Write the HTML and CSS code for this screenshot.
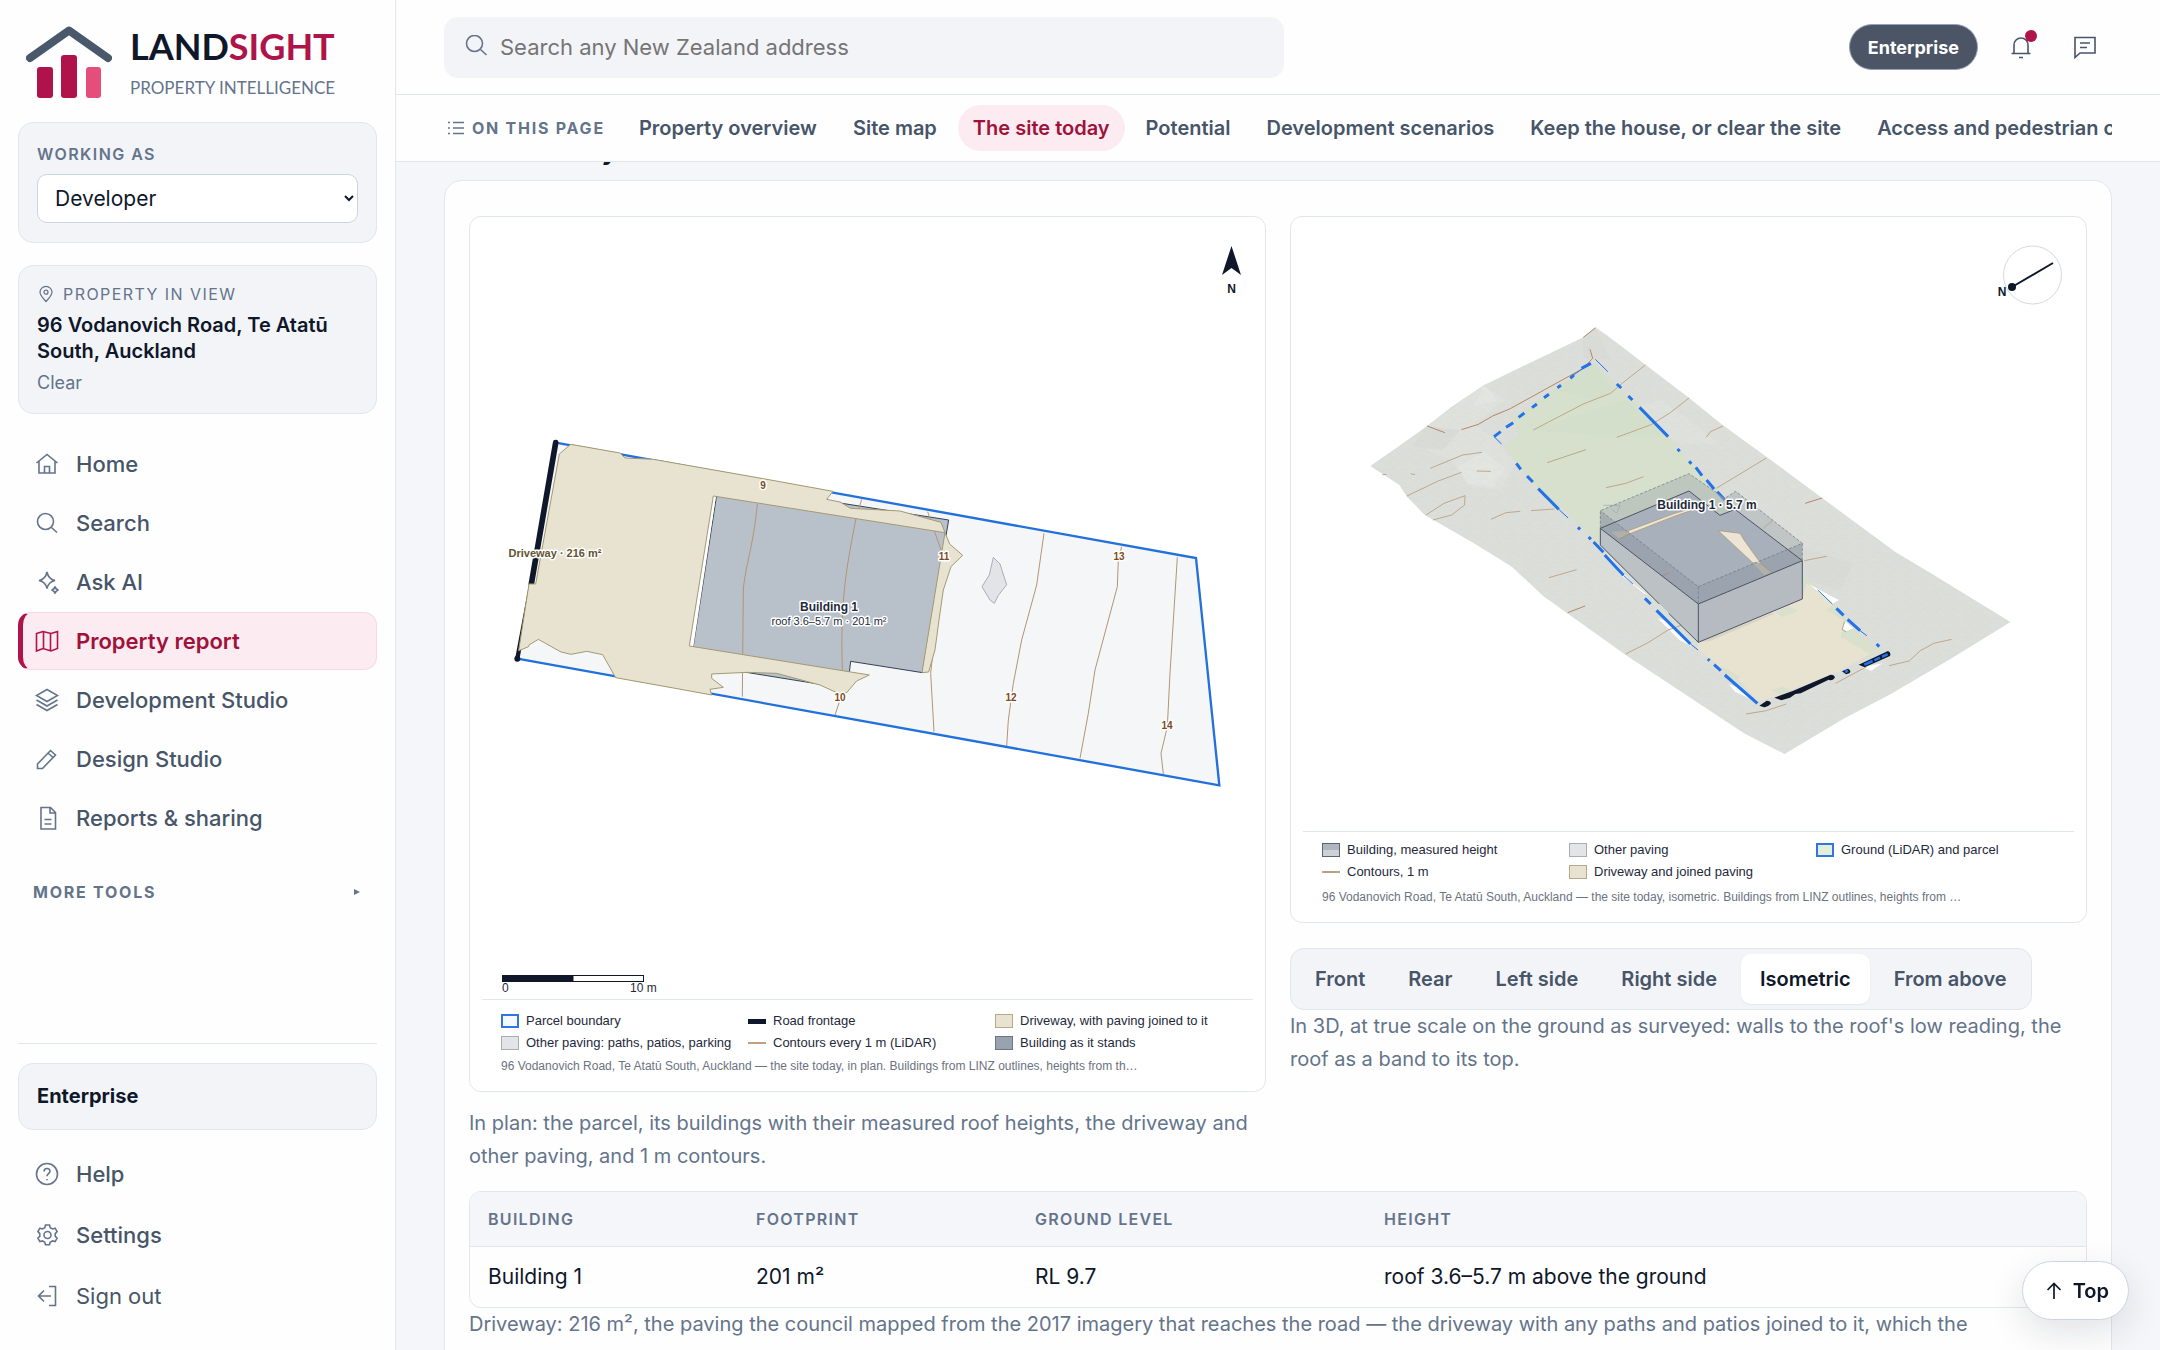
FILE: index.html
```html
<!DOCTYPE html>
<html lang="en">
<head>
<meta charset="utf-8">
<meta name="viewport" content="width=device-width, initial-scale=1">
<title>Landsight – Property report</title>
<link rel="stylesheet" href="styles.css">
</head>
<body>
<div class="app">
  <aside class="sidebar">
    <a class="brand" href="#home" aria-label="Landsight home">
      <svg class="brand-mark" viewBox="0 0 86 72" aria-hidden="true">
        <path d="M4 32 43 4.500 82 32" fill="none" stroke="#4a586c" stroke-width="8" stroke-linecap="round" stroke-linejoin="round"/>
        <rect x="11" y="41" width="16" height="31" rx="3" fill="#b0134a"/>
        <rect x="35" y="29" width="16" height="43" rx="3" fill="#b0134a"/>
        <rect x="60" y="41" width="15" height="31" rx="3" fill="#e54e7c"/>
      </svg>
      <span class="brand-text">
        <span class="brand-name">LAND<span class="brand-accent">SIGHT</span></span>
        <span class="brand-tag">PROPERTY INTELLIGENCE</span>
      </span>
    </a>

    <div class="side-card role-card">
      <label class="side-label" for="role">WORKING AS</label>
      <select id="role" class="role-select">
        <option>Developer</option>
        <option>Homeowner</option>
      </select>
    </div>

    <div class="side-card property-card">
      <div class="property-label">
        <svg class="icon-pin" viewBox="0 0 18 18" aria-hidden="true"><path d="M9 16.500C6 13 3 10.500 3 7.300a6 6 0 0 1 12 0c0 3.200-3 5.700-6 9.200Z"/><circle cx="9" cy="7.200" r="2"/></svg>
        PROPERTY IN VIEW
      </div>
      <strong class="property-name">96 Vodanovich Road, Te Atatū South, Auckland</strong>
      <button class="clear-btn" type="button">Clear</button>
    </div>

    <nav class="side-nav" aria-label="Main">
      <a class="side-link" href="#home"><svg class="icon" viewBox="0 0 24 24"><path d="M1.500 11 12 2.500 22.500 11M4 9.500V21h16V9.500M9.500 21v-6.500h5V21"/></svg>Home</a>
      <a class="side-link" href="#search"><svg class="icon" viewBox="0 0 24 24"><circle cx="10.500" cy="10.500" r="8"/><path d="m16.500 16.500 5.500 5"/></svg>Search</a>
      <a class="side-link" href="#ask"><svg class="icon" viewBox="0 0 24 24"><path d="M12 2c1 5 3 7.500 8 8.500-5 1-7 3-8 8-1-5-3-7-8-8 5-1 7-3.500 8-8.500Z"/><path d="M20 16.500c.4 2 1.300 3 3.500 3.500-2.200.5-3.100 1.500-3.500 3.500-.4-2-1.300-3-3.500-3.500 2.200-.5 3.100-1.500 3.500-3.500Z"/></svg>Ask AI</a>
      <a class="side-link is-active" href="#report" aria-current="page"><svg class="icon" viewBox="0 0 24 24"><path d="m1.500 4.500 6.500-2 8 2 6.500-2v17l-6.500 2.500-8-2.500-6.500 2.500ZM8.500 2.500v17M15.500 4.500V22"/></svg>Property report</a>
      <a class="side-link" href="#development"><svg class="icon" viewBox="0 0 24 24"><path d="m12 1.500 10.500 6L12 13.500l-10.500-6ZM1.500 12 12 18l10.500-6M1.500 16.500l10.500 6 10.500-6"/></svg>Development Studio</a>
      <a class="side-link" href="#design"><svg class="icon" viewBox="0 0 24 24"><path d="m2.500 17 13-13.500 5 4.500L7.500 21.500h-5ZM13 6l5 4.500"/></svg>Design Studio</a>
      <a class="side-link" href="#reports"><svg class="icon" viewBox="0 0 24 24"><path d="M6 1.500h9.500l5 5V23H6ZM15 1.500V7h5.500M9.500 13.500h7M9.500 18h7"/></svg>Reports &amp; sharing</a>
    </nav>

    <button class="more-tools" type="button">MORE TOOLS<svg class="icon-caret" viewBox="0 0 6 8" aria-hidden="true"><path d="M0 1 6 4 0 7Z"/></svg></button>

    <div class="side-foot">
      <div class="side-card plan-card">Enterprise</div>
      <a class="side-link foot-link" href="#help"><svg class="icon" viewBox="0 0 24 24"><circle cx="12" cy="12" r="10.500"/><path d="M9 9.500c0-4 6-4 6-.3 0 2.300-3 2.500-3 5M12 17v1.200"/></svg>Help</a>
      <a class="side-link foot-link" href="#settings"><svg class="icon" viewBox="0 0 24 24"><path d="M10.500 2h4l.7 2.600 2.300 1.300 2.600-.7 2 3.400-1.900 2v2.600l1.900 2-2 3.400-2.600-.7-2.300 1.300-.7 2.600h-4l-.7-2.600-2.300-1.300-2.600.7-2-3.400 1.900-2v-2.600l-1.900-2 2-3.400 2.600.7 2.300-1.300Z"/><circle cx="12.500" cy="12" r="3.500"/></svg>Settings</a>
      <a class="side-link foot-link" href="#signout"><svg class="icon" viewBox="0 0 24 24"><path d="M14 2.500h6.500v19H14M16 12H4M9 6.500 3.500 12 9 17.500"/></svg>Sign out</a>
    </div>
  </aside>

  <div class="main">
    <div class="sticky-head">
      <header class="topbar">
        <div class="search">
          <svg class="icon search-icon" viewBox="0 0 24 24" aria-hidden="true"><circle cx="10.500" cy="8.500" r="8"/><path d="m16.500 14.500 6 5.500"/></svg>
          <input class="search-input" type="search" placeholder="Search any New Zealand address" aria-label="Search any New Zealand address">
        </div>
        <div class="top-actions">
          <span class="plan-pill">Enterprise</span>
          <button class="icon-btn" type="button" aria-label="Notifications">
            <svg class="icon" viewBox="0 0 24 24"><path d="M5 18.500V10a7 7 0 0 1 14 0v8.500M2.500 18.500h19M10 22.500h4"/></svg>
            <span class="dot"></span>
          </button>
          <button class="icon-btn" type="button" aria-label="Messages">
            <svg class="icon" viewBox="0 0 24 24"><path d="M2 2.500h20V18H7l-5 4.500ZM7 8h10M7 12.500h7"/></svg>
          </button>
        </div>
      </header>
      <nav class="page-nav" aria-label="On this page">
        <span class="page-nav-title"><svg class="icon-list" viewBox="0 0 16 16" aria-hidden="true"><path d="M5 2.500h11M5 8h11M5 13.500h11M0 2.500h2M0 8h2M0 13.500h2"/></svg>ON THIS PAGE</span>
        <a class="page-link" href="#overview">Property overview</a>
        <a class="page-link" href="#map">Site map</a>
        <a class="page-link is-current" href="#today">The site today</a>
        <a class="page-link" href="#potential">Potential</a>
        <a class="page-link" href="#scenarios">Development scenarios</a>
        <a class="page-link" href="#keep">Keep the house, or clear the site</a>
        <a class="page-link" href="#access">Access and pedestrian connections</a>
      </nav>
    </div>

    <main class="content">
      <h2 class="section-title" id="today">The site today</h2>
      <section class="card">
        <div class="views">
          <div class="view">
            <figure class="sheet">
              <svg class="drawing" viewBox="482 217 771 782" role="img" aria-label="Site plan">
                <g class="plan" transform="translate(460 400) scale(.333333)">
                  <path class="parcel" d="M287 128 2208 474 2278 1156 172 776Z"/>
                  <path class="hole" d="M760 288 775 288 705 740 688 738Z"/>
                  <path class="building" d="M775 252 1466 360 1388 818 1172 784 1162 866 692 790Z"/>
                  <path class="gap" d="M755 286 768 288 700 741 686 741Z"/>
                  <path class="contour" d="M892 312C880 440 855 500 850 570L847 890M1205 298 1187 360C1160 500 1140 600 1147 810M1140 900 1125 945M1403 335 1450 470 1412 820 1422 995"/>
                  <path class="contour" transform="translate(1260 180)" d="M492 220 470 375 425 540 400 670 385 780 380 858M725 260 715 300 712 380 645 630 625 760 600 895M892 292 870 640 862 800 843 880 850 942"/>
                  <path class="parcel-line" d="M287 128 2208 474 2278 1156 172 776"/>
                  <path class="frontage" d="M287 128 214 552"/><path class="frontage thin" d="M214 552 172 776"/>
                  <circle cx="172" cy="776" r="9" fill="#0f172a"/>
                  <path class="driveway" fill-rule="evenodd" d="M298 162 332 133 480 159 495 174 580 178 910 236 1119 274 1100 298 1140 306 1172 325 1320 333 1443 367 1455 398 760 288 688 738 1228 825 1190 843 1160 878 1135 880 1080 855 950 820 860 817 755 822 755 835 790 862 750 868 755 885 640 864 467 833 428 764 380 754 333 763 303 756 235 718 207 735 206 740 176 752 207 552 227 552Z"/>
                  <path class="driveway" d="M1455 398 1469 432 1508 466 1473 500 1450 570 1437 660 1425 750 1406 816 1386 818Z"/>
                  <path class="paving" transform="translate(1260 180)" d="M340 292 360 312 380 374 355 406 343 430 330 420 306 380 328 345Z"/>
                </g>
                <g class="map-num" text-anchor="middle">
                  <text x="763" y="489">9</text><text x="944" y="560">11</text><text x="840" y="701">10</text>
                  <text x="1011" y="701">12</text><text x="1119" y="560">13</text><text x="1167" y="729">14</text>
                </g>
                <text class="map-drive" x="555" y="557" text-anchor="middle">Driveway · 216 m²</text>
                <text class="map-name" x="829" y="611" text-anchor="middle">Building 1</text>
                <text class="map-sub" x="829" y="625" text-anchor="middle">roof 3.6–5.7 m · 201 m²</text>
                <path d="M1231.500 246 1241 275 1231.500 268 1222 275Z" fill="#0f172a"/>
                <text class="north" x="1231.500" y="293" text-anchor="middle">N</text>
                <rect x="502" y="975" width="71" height="7" fill="#0f172a"/>
                <rect x="573" y="975.500" width="70.500" height="6" fill="#fff" stroke="#0f172a"/>
                <text class="scale" x="502" y="992">0</text><text class="scale" x="630" y="992">10 m</text>
              </svg>
              <div class="legend">
                <ul class="legend-list">
                  <li><i class="sw sw-parcel"></i>Parcel boundary</li>
                  <li><i class="sw sw-road"></i>Road frontage</li>
                  <li><i class="sw sw-drive"></i>Driveway, with paving joined to it</li>
                  <li><i class="sw sw-paving"></i>Other paving: paths, patios, parking</li>
                  <li><i class="sw sw-contour"></i>Contours every 1 m (LiDAR)</li>
                  <li><i class="sw sw-building"></i>Building as it stands</li>
                </ul>
                <p class="legend-note">96 Vodanovich Road, Te Atatū South, Auckland — the site today, in plan. Buildings from LINZ outlines, heights from th…</p>
              </div>
            </figure>
            <p class="caption caption-plan">In plan: the parcel, its buildings with their measured roof heights, the driveway and other paving, and 1 m contours.</p>
          </div>

          <div class="view">
            <figure class="sheet">
              <svg class="drawing" viewBox="1303 217 771 614" role="img" aria-label="Isometric view of the site">
                <defs>
                  <pattern id="mesh" width="34" height="28" patternUnits="userSpaceOnUse"><path d="M0 6 17 0 34 16M17 0 8 14 24 28M8 14 0 18" fill="none" stroke="#b9bcb8" stroke-width=".5" opacity=".45"/></pattern>
                </defs>
                <g class="iso" transform="translate(1340 300) scale(.446429 .333333)">
                  <path id="land" fill="#dcdeda" d="M572 82 600 108 680 190 780 292 860 378 955 470 1080 594 1245 757 1330 825 1502 966 1370 1075 1230 1185 1130 1255 996 1362 905 1300 640 1065 455 888 385 800 300 730 190 645 150 590 133 555 68 498 130 440 195 378 250 320 322 256 400 205 545 112Z"/>
                  <path fill="#dfe1dd" d="M322 256 370 300 300 370 340 410 395 490 360 570 290 560 250 480 195 450 195 378ZM640 330 720 300 850 430 760 430Z"/>
                  <path fill="#e6e8e4" d="M265 500 320 455 370 505 345 560 285 550ZM322 256 355 300 300 320Z" opacity=".6"/>
                  <path fill="#d9dbd7" d="M572 82 605 180 545 175 545 112ZM1040 740 1150 790 1120 870 1040 840ZM195 378 270 390 230 450 160 440Z"/>
                  <path fill="url(#mesh)" d="M572 82 600 108 680 190 780 292 860 378 955 470 1080 594 1245 757 1330 825 1502 966 1370 1075 1230 1185 1130 1255 996 1362 905 1300 640 1065 455 888 385 800 300 730 190 645 150 590 133 555 68 498 130 440 195 378 250 320 322 256 400 205 545 112Z"/>
                  <path fill="#d6e0cd" d="M570 188 385 350 400 405 365 440 395 490 440 560 510 640 583 740 803 1026 900 1135 970 1165 1200 1062 1105 910 860 600 735 410 625 262Z"/>
                  <path fill="#d2ddc9" d="M570 188 480 270 570 300 610 270ZM430 390 620 410 735 410 640 300Z" opacity=".5"/>
                  <path fill="#e8e2d1" d="M1045 850 1105 915 1090 930 1128 960 1122 1010 1188 1062 1120 1112 985 1185 935 1205 895 1140 840 1090 800 1045 803 1026 1036 895Z"/>
                  <path fill="#d9e0cc" d="M975 935 1005 918 1026 932 992 952ZM1122 1010 1150 990 1205 1050 1188 1062ZM965 1170 993 1160 1020 1176 990 1186ZM850 1095 898 1132 880 1140ZM1090 930 1105 915 1128 950Z"/>
                  <path fill="#fff" d="M1050 852 1117 900 1103 912ZM1132 965 1150 985 1134 994 1126 986ZM600 765 655 850 690 885 680 880 625 820ZM712 955 735 965 790 1040 760 1020ZM870 1152 895 1165 925 1200 885 1175ZM1170 1102 1215 1090 1190 1112Z"/>
                  <path class="contour strong" d="M545 112 572 84M560 148 566 175 545 205 380 327 342 348 310 373 272 389M195 378 235 398M1042 610 1080 594M510 938 549 918"/>
                  <path class="contour" d="M684 195 632 250 606 280 545 312 433 390M782 294 740 338 697 374 620 412M858 378 830 395 820 412M955 474 843 565M318 457 275 465 202 505M306 513 338 514M272 517 220 543 150 588M280 587 233 610 193 645M280 587 279 615 250 645 208 660M404 634 372 638 338 658M480 627 428 632M551 449 464 488M680 530 640 550 596 563M530 809 468 833M1090 769 1040 782M970 660 948 685M800 958 735 990 690 1028 640 1062M910 1242 955 1232 1000 1212M1110 1150 1180 1100M1370 1018 1330 1030 1300 1052 1275 1083 1230 1097M95 524 104 523M158 521 168 524M1130 965 1125 988 1134 996"/>
                  <path class="iso-line" d="M345 410 360 395M372 382 388 368M400 352 413 339M430 323 441 312M457 293 468 283M487 263 495 256M516 235 524 225M541 205 562 190M620 252 630 264M646 288 655 300M671 322 735 410M756 447 761 454M782 484 787 491M797 502 811 527M821 540 838 567M845 575 862 600M395 490 405 508M419 528 432 546M444 566 490 628M533 682 538 688M557 711 562 718M568 726 590 757M593 765 635 826M683 895 696 912M709 931 785 1032M824 1077 828 1082M838 1094 853 1112M862 1125 935 1210M1112 925 1128 946M1137 958 1165 992M1202 1032 1208 1040"/>
                  <path class="iso-line fine" d="M345 410 362 432M572 178 600 215M490 628 511 654M635 826 656 852M785 1032 802 1050M1165 992 1180 1007M1070 870 1103 912M560 190 516 232"/>
                </g>
                <g transform="translate(1560 460) scale(.333333)">
                  <path fill="#0f172a" d="M598 737 620 722Q634 722 632 732 620 744 610 741ZM643 713 700 692 812 644Q826 644 824 654 816 664 806 659L722 700 706 702 690 713 664 721ZM846 634 864 626Q876 632 868 640L858 643ZM896 614 984 573Q994 577 990 588L914 622Z"/>
                  <path d="M913 614 938 603M943 601 960 593M966 590 983 583M855 636 864 632" stroke="#2272e8" stroke-width="8" fill="none"/>
                  <path d="M121 255 415 547V432L121 205Z" fill="#bcc1c6"/>
                  <path d="M415 432 727 302V417L415 547Z" fill="#b6bbc1"/>
                  <path d="M121 205 387 93 480 166 525 148 727 302 415 432Z" fill="#a8b0bb"/>
                  <path d="M121 152 387 41 495 115 527 94 727 250 727 302 525 148 480 166 387 93 121 205Z" fill="#a3aeb0" opacity=".5"/>
                  <path d="M121 152 415 380 727 250V302L415 432 121 205Z" fill="#8d96a4" opacity=".5"/>
                  <path d="M205 212 345 160 385 148 395 151 345 168 205 223ZM475 212 540 220 552 240 602 310 578 308Z" fill="#ece4d4" stroke="#a8966a" stroke-width="2"/>
                  <path d="M602 310 635 337 612 345 578 308ZM205 212 205 223 178 237 155 215Z" fill="#afb1a9"/>
                  <path d="M602 310 635 337M205 223 178 237M326 339 308 347" fill="none" stroke="#a8866a" stroke-width="2"/>
                  <path d="M130 136H180L170 160 155 148" fill="none" stroke="#9aa6b0" stroke-width="2"/>
                  <path d="M415 547 640 458 640 463 450 543Z" fill="#d8d4c4"/>
                  <path class="edge" d="M121 205 387 93 480 166 525 148 727 302 415 432ZM121 205V255L298 432M326 460 415 547 727 417V302M415 432V547"/>
                  <path class="edge dashed" d="M121 205V152L387 41 495 115 527 94 727 250 415 380 121 152M415 380V432M727 250V302"/>
                </g>
                <text class="map-name iso-name" x="1707" y="509" text-anchor="middle">Building 1 · 5.7 m</text>
                <circle cx="2032.500" cy="275" r="29" fill="#fff" stroke="#d5d9e0"/>
                <path d="M2012 287 2053 263" stroke="#0f172a" stroke-width="2"/><circle cx="2012" cy="287" r="4" fill="#0f172a"/>
                <text class="north" x="2002" y="296" text-anchor="middle">N</text>
              </svg>
              <div class="legend legend-compact">
                <ul class="legend-list">
                  <li><i class="sw sw-measured"></i>Building, measured height</li>
                  <li><i class="sw sw-paving"></i>Other paving</li>
                  <li><i class="sw sw-ground"></i>Ground (LiDAR) and parcel</li>
                  <li><i class="sw sw-contour"></i>Contours, 1 m</li>
                  <li><i class="sw sw-drive"></i>Driveway and joined paving</li>
                </ul>
                <p class="legend-note">96 Vodanovich Road, Te Atatū South, Auckland — the site today, isometric. Buildings from LINZ outlines, heights from …</p>
              </div>
            </figure>
            <div class="tabs" role="group" aria-label="View">
              <button class="tab" type="button">Front</button>
              <button class="tab" type="button">Rear</button>
              <button class="tab" type="button">Left side</button>
              <button class="tab" type="button">Right side</button>
              <button class="tab is-on" type="button" aria-pressed="true">Isometric</button>
              <button class="tab" type="button">From above</button>
            </div>
            <p class="caption">In 3D, at true scale on the ground as surveyed: walls to the roof's low reading, the roof as a band to its top.</p>
          </div>
        </div>

        <div class="table-wrap">
          <table class="table">
            <colgroup><col class="c1"><col class="c2"><col class="c3"><col></colgroup>
            <thead><tr><th scope="col">BUILDING</th><th scope="col">FOOTPRINT</th><th scope="col">GROUND LEVEL</th><th scope="col">HEIGHT</th></tr></thead>
            <tbody><tr><td>Building 1</td><td>201 m²</td><td>RL 9.7</td><td>roof 3.6–5.7 m above the ground</td></tr></tbody>
          </table>
        </div>
        <p class="caption">Driveway: 216 m², the paving the council mapped from the 2017 imagery that reaches the road — the driveway with any paths and patios joined to it, which the</p>
      </section>
    </main>
  </div>
</div>
<a class="to-top" href="#top"><svg class="icon-up" viewBox="0 0 16 18" aria-hidden="true"><path d="M8 17V2M1.500 8 8 1.500 14.500 8"/></svg>Top</a>
</body>
</html>
```
FILE: styles.css
```css
:root {
  --ink: #0f172a;
  --slate: #475569;
  --muted: #64748b;
  --line: #e2e6ed;
  --soft: #f3f4f8;
  --page: #f5f6fa;
  --rose: #b0134a;
  --rose-dark: #9f1239;
  --rose-soft: #fcebf1;
  --map-font: "Liberation Sans", Arial, sans-serif;
}

* { box-sizing: border-box; }

body {
  margin: 0;
  background: var(--page);
  color: var(--ink);
  font-family: Inter, "Liberation Sans", sans-serif;
  font-size: 21px;
  scrollbar-width: none;
}

button, input, select { font: inherit; color: inherit; }
a { color: inherit; text-decoration: none; }
p, h2, ul, figure { margin: 0; padding: 0; }

.app {
  display: grid;
  grid-template-columns: 396px minmax(0, 1fr);
}

.icon {
  width: 24px;
  height: 24px;
  flex: none;
  fill: none;
  stroke: currentColor;
  stroke-width: 1.600;
}

/* Sidebar */
.sidebar {
  position: sticky;
  top: 0;
  height: 100vh;
  display: flex;
  flex-direction: column;
  padding: 24px 18px 25px;
  background: #fefefe;
  border-right: 1px solid var(--line);
}

.brand {
  display: flex;
  align-items: center;
  gap: 18px;
  height: 76px;
  padding-left: 8px;
  margin-bottom: 22px;
  flex: none;
}
.brand-mark { width: 86px; height: 72px; }
.brand-text { display: flex; flex-direction: column; gap: 12px; font-family: Lato, sans-serif; }
.brand-name { font-size: 36px; line-height: 40px; font-weight: 700; }
.brand-accent { color: var(--rose); }
.brand-tag { font-size: 17px; line-height: 20px; color: var(--muted); white-space: nowrap; }

.side-card {
  flex: none;
  padding: 19px 18px;
  background: var(--soft);
  border: 1px solid var(--line);
  border-radius: 15px;
}
.role-card { height: 121px; margin-bottom: 22px; display: flex; flex-direction: column; }
.side-label { font-size: 16px; line-height: 24px; font-weight: 600; letter-spacing: .09em; color: var(--muted); margin-bottom: 8px; }
.role-select {
  height: 49px;
  padding: 0 0 0 13px;
  background: #fff;
  border: 1px solid #cbd5e1;
  border-radius: 10px;
}

.property-card { height: 149px; margin-bottom: 21px; padding-top: 16px; display: flex; flex-direction: column; align-items: flex-start; }
.property-label { display: flex; align-items: center; gap: 8px; font-size: 16px; line-height: 24px; letter-spacing: .09em; color: var(--muted); margin-bottom: 6px; }
.icon-pin { width: 18px; height: 18px; fill: none; stroke: currentColor; stroke-width: 1.200; }
.property-name { font-size: 20px; line-height: 26px; font-weight: 600; }
.clear-btn { padding: 0; margin-top: 7px; border: 0; background: none; font-size: 18px; line-height: 24px; color: var(--muted); }

.side-nav { display: flex; flex-direction: column; gap: 1px; }
.side-link {
  display: flex;
  align-items: center;
  gap: 17px;
  height: 58px;
  padding-left: 17px;
  flex: none;
  border-radius: 13px;
  font-size: 22px;
  font-weight: 500;
  color: var(--slate);
}
.side-link .icon { color: var(--muted); }
.side-link.is-active {
  padding-left: 12px;
  background: var(--rose-soft);
  border: 1px solid #f7d9e3;
  border-left: 5px solid var(--rose);
  color: var(--rose-dark);
  font-weight: 600;
}
.side-link.is-active .icon { color: var(--rose); }

.more-tools {
  display: flex;
  align-items: center;
  justify-content: space-between;
  margin-top: 29px;
  padding: 0 17px 0 15px;
  height: 32px;
  flex: none;
  border: 0;
  background: none;
  font-size: 16px;
  font-weight: 700;
  letter-spacing: .11em;
  color: var(--muted);
}
.icon-caret { width: 6px; height: 8px; fill: currentColor; }

.side-foot {
  display: flex;
  flex-direction: column;
  gap: 3px;
  margin-top: auto;
  padding-top: 19px;
  border-top: 1px solid var(--line);
}
.plan-card { height: 67px; margin-bottom: 12px; font-size: 20px; line-height: 27px; font-weight: 700; }
.foot-link { font-weight: 500; }
.foot-link:last-child { font-weight: 400; }

/* Header */
.sticky-head {
  position: sticky;
  top: 0;
  z-index: 5;
  background: #fefeff;
  border-bottom: 1px solid var(--line);
}
.topbar {
  display: flex;
  align-items: center;
  justify-content: space-between;
  height: 95px;
  padding: 0 54px 0 48px;
  border-bottom: 1px solid var(--line);
}
.search {
  display: flex;
  align-items: center;
  gap: 12px;
  width: 840px;
  height: 61px;
  padding: 0 20px;
  background: var(--soft);
  border-radius: 14px;
}
.search-icon { color: var(--muted); }
.search-input {
  flex: 1;
  min-width: 0;
  padding: 0;
  border: 0;
  outline: 0;
  background: none;
  font-size: 22px;
}
.search-input::placeholder { color: #757575; }
.top-actions { display: flex; align-items: center; gap: 22px; }
.plan-pill {
  display: flex;
  align-items: center;
  height: 46px;
  padding: 0 18px;
  border: 1px solid #94a3b8;
  border-radius: 23px;
  background: #4b5565;
  color: #fff;
  font-size: 18px;
  font-weight: 700;
}
.icon-btn {
  position: relative;
  display: grid;
  place-items: center;
  width: 42px;
  height: 42px;
  padding: 0;
  border: 0;
  background: none;
  color: var(--slate);
}
.dot {
  position: absolute;
  top: 4px;
  right: 5px;
  width: 12px;
  height: 12px;
  border-radius: 50%;
  background: var(--rose);
}

.page-nav {
  display: flex;
  align-items: center;
  gap: 6px;
  height: 66px;
  margin: 0 48px;
  overflow: hidden;
  white-space: nowrap;
}
.page-nav-title {
  display: flex;
  align-items: center;
  gap: 8px;
  flex: none;
  padding-left: 4px;
  margin-right: 13px;
  font-size: 16px;
  font-weight: 700;
  letter-spacing: .11em;
  color: var(--muted);
}
.icon-list { width: 16px; height: 16px; stroke: currentColor; stroke-width: 1.500; }
.page-link {
  flex: none;
  height: 46px;
  padding: 0 15px;
  border-radius: 23px;
  font-size: 20px;
  line-height: 46px;
  font-weight: 600;
  color: var(--slate);
}
.page-link.is-current { background: var(--rose-soft); color: var(--rose-dark); }

/* Content */
.content { padding: 0 48px 48px; }
.section-title { margin-top: -27px; margin-bottom: 13px; font-size: 25px; line-height: 32px; font-weight: 700; }
.card {
  padding: 35px 24px;
  background: #fefefe;
  border: 1px solid var(--line);
  border-radius: 18px;
}
.views {
  display: grid;
  grid-template-columns: repeat(2, minmax(0, 1fr));
  gap: 24px;
  align-items: start;
}
.sheet {
  padding: 0 12px;
  background: #fff;
  border: 1px solid var(--line);
  border-radius: 12px;
}
.drawing { display: block; width: 100%; height: auto; }

.parcel { fill: #f4f6f8; }
.parcel-line { fill: none; stroke: #2270dc; stroke-width: 7; }
.gap, .hole { fill: #fff; }
.building { fill: #b8c0ca; stroke: #334155; stroke-width: 3; }
.driveway { fill: #e8e2d1; stroke: #a39a70; stroke-width: 3; stroke-linejoin: round; }
.paving { fill: #e2e4e8; stroke: #a9adb5; stroke-width: 3; }
.frontage { fill: none; stroke: #0f172a; stroke-width: 17; stroke-linecap: round; }
.frontage.thin { stroke-width: 13; }
.contour { fill: none; stroke: #b39473; stroke-width: 3; }
.iso .contour { stroke-width: 1px; vector-effect: non-scaling-stroke; stroke: #bfa888; }
.iso .contour.strong { stroke: #b58763; }
.iso-line { fill: none; stroke: #2272e8; stroke-width: 3px; vector-effect: non-scaling-stroke; }
.iso-line.fine { stroke-width: 1px; }
.edge { fill: none; stroke: #4b5363; stroke-width: 3; }
.edge.dashed { stroke: #6b7280; stroke-width: 2; stroke-dasharray: 9 5; }

.drawing text { font-family: var(--map-font); fill: #1e293b; }
.drawing .map-num text, .drawing .map-drive, .drawing .map-name, .drawing .map-sub {
  paint-order: stroke;
  stroke: #fff;
  stroke-width: 3px;
  stroke-linejoin: round;
}
.drawing .map-num text { font-size: 10px; font-weight: 700; fill: #7c4a21; }
.drawing .map-drive { font-size: 11px; font-weight: 700; fill: #5f5330; }
.drawing .map-name { font-size: 12px; font-weight: 700; }
.drawing .map-sub { font-size: 11px; }
.drawing .north { font-size: 12px; font-weight: 700; fill: #0f172a; }
.drawing .scale { font-size: 12px; }

.legend {
  padding: 10px 19px 17px;
  border-top: 1px solid var(--line);
  font-family: var(--map-font);
}
.legend-list {
  display: grid;
  grid-template-columns: repeat(3, 247px);
  list-style: none;
  font-size: 13px;
  line-height: 22px;
  color: #1e293b;
  white-space: nowrap;
}
.legend-list li { display: flex; align-items: center; gap: 7px; }
.sw { display: block; width: 18px; height: 14px; border: 1px solid #a9adb5; background: #e2e4e8; }
.sw-parcel { border: 2px solid #2f76e0; background: #f4f8ff; }
.sw-road { height: 5px; border: 0; background: #0f172a; }
.sw-drive { border-color: #b5aa85; background: #e8e2d1; }
.sw-contour { height: 2px; border: 0; background: #bca283; }
.sw-building { border-color: #6b7686; background: #99a3b0; }
.sw-measured { border-color: #5b6472; background: linear-gradient(#b0b6bf 50%, #cdd2d9 50%); }
.sw-ground { border: 2px solid #2f76e0; background: #e1efdc; }
.legend-note { margin-top: 4px; font-size: 12px; line-height: 16px; color: #6b7280; white-space: nowrap; }
.legend-compact { padding-top: 7px; }
.legend-compact .legend-note { margin-top: 6px; }

.caption { font-size: 20px; line-height: 33px; color: var(--muted); }
.caption-plan { margin-top: 15px; }

.tabs {
  display: flex;
  gap: 5px;
  width: max-content;
  margin-top: 25px;
  padding: 5px;
  background: var(--soft);
  border: 1px solid var(--line);
  border-radius: 14px;
}
.tab {
  height: 50px;
  padding: 0 19px;
  border: 0;
  border-radius: 10px;
  background: none;
  font-size: 20px;
  font-weight: 600;
  color: var(--slate);
}
.tab.is-on { background: #fff; color: var(--ink); box-shadow: 0 1px 2px rgba(15, 23, 42, .06); }

.table-wrap {
  margin-top: 18px;
  overflow: hidden;
  border: 1px solid var(--line);
  border-radius: 12px;
}
.table { width: 100%; border-collapse: collapse; table-layout: fixed; text-align: left; }
.c1 { width: 268px; }
.c2 { width: 279px; }
.c3 { width: 349px; }
.table th {
  height: 54px;
  padding: 0 18px;
  background: var(--page);
  border-bottom: 1px solid var(--line);
  font-size: 16px;
  font-weight: 600;
  letter-spacing: .08em;
  color: var(--muted);
}
.table td { height: 61px; padding: 0 18px; font-size: 21px; }

.to-top {
  position: fixed;
  right: 31px;
  bottom: 30px;
  z-index: 6;
  display: flex;
  align-items: center;
  gap: 11px;
  height: 59px;
  padding: 0 19px 0 23px;
  background: #fff;
  border: 1px solid #cbd5e1;
  border-radius: 30px;
  box-shadow: 0 12px 36px rgba(15, 23, 42, .12);
  font-size: 20px;
  font-weight: 600;
}
.icon-up { width: 16px; height: 18px; fill: none; stroke: currentColor; stroke-width: 1.700; }
```
